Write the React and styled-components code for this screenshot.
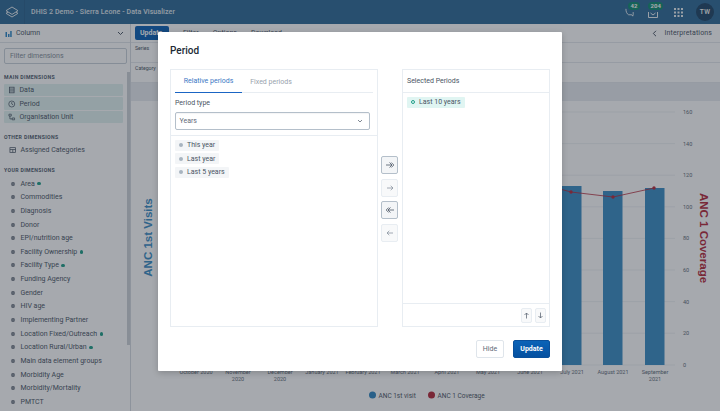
import React from "react";
import styled, { createGlobalStyle } from "styled-components";

const Global = createGlobalStyle`
  html, body { margin: 0; padding: 0; background: #fff; }
  body { font-family: Roboto, "Noto Sans", sans-serif; }
  * { box-sizing: border-box; }
`;

const Page = styled.div`
  position: relative; width: 720px; height: 411px; overflow: hidden;
  display: flex; flex-direction: column; background: #fff; color: #4a5564;
`;
const Header = styled.header`
  height: 24px; flex: none; display: flex; align-items: center;
  background: #2e6a97; color: #fff;
`;
const LogoBox = styled.div`
  width: 25px; height: 24px; display: flex; align-items: center; justify-content: center;
  border-right: 1px solid #2a628d;
`;
const AppTitle = styled.div`
  margin-left: 6px; flex: 1; font-size: 7px; font-weight: 500; letter-spacing: .1px; white-space: nowrap; opacity: .85;
`;
const HeaderIcon = styled.div`
  position: relative; width: 10px; height: 10px; margin-right: ${p => p.$gap}px;
  display: flex; align-items: center; justify-content: center;
`;
const Badge = styled.span`
  position: absolute; top: -5px; left: ${p => p.$left}px; height: 7.5px; padding: 0 2.5px; border-radius: 4px;
  background: #0f8a70; color: #fff; font-size: 6px; font-weight: 700; line-height: 7.5px;
`;
const Avatar = styled.div`
  width: 18px; height: 18px; border-radius: 50%; margin-right: 6px; background: #1e4566;
  display: flex; align-items: center; justify-content: center;
  font-size: 6.5px; font-weight: 500; letter-spacing: .4px;
`;
const Body = styled.div`flex: 1; display: flex; min-height: 0;`;
const Sidebar = styled.aside`
  position: relative; width: 131px; flex: none; overflow: hidden; border-right: 1px solid #d5dbe2;
`;
const ChartType = styled.div`
  height: 19px; display: flex; align-items: center; padding: 0 6px 0 5px; gap: 4px;
  font-size: 7px; border-bottom: 1px solid #dfe4ea; color: #4a5564;
`;
const Grow = styled.span`flex: 1;`;
const FilterInput = styled.div`
  margin: 5px 4px 0; width: 123px; height: 16px; border: 1px solid #c9d1d9; border-radius: 2px;
  padding: 0 5px; font-size: 7px; line-height: 14px; color: #848e99; background: #fff;
`;
const SectionTitle = styled.div`
  margin: ${p => p.$top}px 0 0 4px; height: 9px; line-height: 9px; font-size: 5.2px; font-weight: 700;
  letter-spacing: .35px; color: #525e6e; white-space: nowrap;
`;
const Items = styled.div`display: flex; flex-direction: column; margin-top: ${p => p.$top || 1}px;`;
const Item = styled.div`
  height: ${p => p.$chip ? "12.5px" : "13.66px"}; margin: ${p => p.$chip ? "0.6px 7px 0.6px 4px" : "0 7px 0 4px"};
  display: flex; align-items: center; gap: 4px; padding-left: ${p => p.$chip ? "4px" : "5px"};
  font-size: 7px; color: #4a5564; white-space: nowrap; border-radius: 1px;
  background: ${p => p.$chip ? "#e2f2f1" : "transparent"};
`;
const IconSlot = styled.span`
  width: 7.5px; height: 8px; flex: none; display: flex; align-items: center; justify-content: center;
`;
const Dot = styled.span`flex: none; width: 3.5px; height: 3.5px; border-radius: 50%; background: #1f9e88; margin-left: -1.5px;`;
const Thumb = styled.div`
  position: absolute; right: 0; top: 48px; width: 3.5px; height: 273px; background: #cdd2d8;
`;
const Main = styled.main`flex: 1; min-width: 0; display: flex; flex-direction: column;`;
const Toolbar = styled.div`
  height: 19px; flex: none; display: flex; align-items: center; padding-left: 4px;
  font-size: 7px; border-bottom: 1px solid #e4e8ed;
`;
const UpdateSmall = styled.div`
  width: 34px; height: 14px; border-radius: 2px; background: #0a5fb4; color: #fff;
  display: flex; align-items: center; padding-left: 5px; font-weight: 700; font-size: 7px; margin-right: 14px;
`;
const ToolLink = styled.span`margin-right: ${p => p.$gap}px;`;
const Interp = styled.div`
  margin-left: auto; margin-right: 8px; display: flex; align-items: center; gap: 8px; font-size: 7px;
  letter-spacing: .12px; color: #4a5564;
`;
const LayoutRow = styled.div`
  height: 20px; flex: none; padding: 2px 0 0 4px; font-size: 5.2px; color: #4a5564; border-bottom: 1px solid #e4e8ed;
`;
const Band = styled.div`height: 18px; flex: none; background: #e8ecf1;`;
const ChartWrap = styled.div`flex: 1; min-height: 0;`;
const Chart = styled.svg`display: block;`;

const Overlay = styled.div`
  position: absolute; inset: 0; background: rgba(33, 41, 52, .4);
`;
const Modal = styled.div`
  position: absolute; left: 158px; top: 32px; width: 404px; height: 339px; background: #fff;
  border-radius: 1px; padding: 0 12px; display: flex; flex-direction: column;
  box-shadow: 0 2px 6px rgba(0,0,0,.2);
`;
const ModalTitle = styled.h2`
  margin: 0; height: 37px; line-height: 37px; font-size: 10px; font-weight: 500; color: #212934;
`;
const Columns = styled.div`display: flex; height: 258px;`;
const Panel = styled.div`
  width: ${p => p.$w}px; height: 100%; border: 1px solid #e8edf2; display: flex; flex-direction: column;
`;
const Tabs = styled.div`
  margin: 0 4px; height: 23px; flex: none; display: flex; border-bottom: 1px solid #e8edf2;
`;
const Tab = styled.div`
  width: ${p => p.$w}px; height: 23px; display: flex; align-items: center; justify-content: center; font-size: 7px;
  color: ${p => p.$active ? "#3a78c4" : "#98a2ad"};
  border-bottom: ${p => p.$active ? "1.5px solid #1a65c4" : "none"};
`;
const FieldLabel = styled.div`
  margin: 6px 0 0 4px; height: 9px; line-height: 9px; font-size: 7px; color: #4a5564;
`;
const Select = styled.div`
  margin: 4px 0 0 4px; width: 195px; height: 17.5px; border: 1px solid #b4bfca; border-radius: 2px;
  display: flex; align-items: center; justify-content: space-between; padding: 0 6px 0 3.5px;
  font-size: 7px; color: #5f6a77; box-shadow: inset 0 1px 1px rgba(33,41,52,.05);
`;
const OptionList = styled.div`
  margin-top: 5.5px; border-top: 1px solid #e8edf2; padding: 3.5px 0 0 4px; display: flex; flex-direction: column; align-items: flex-start; gap: 2.67px;
`;
const Chip = styled.div`
  height: 11px; display: flex; align-items: center; gap: 4px; padding: 0 4px;
  border-radius: 1px; font-size: 7px; color: #4a5564; white-space: nowrap;
  background: ${p => p.$sel ? "#e0f5f2" : "#f3f5f7"};
`;
const ChipDot = styled.span`
  width: 4px; height: 4px; border-radius: 50%;
  background: ${p => p.$sel ? "transparent" : "#a8b4c0"};
  border: ${p => p.$sel ? "1px solid #1f9e88" : "none"};
`;
const Transfer = styled.div`
  width: 24px; padding-right: 1px; margin-top: 87px; display: flex; flex-direction: column; align-items: center; gap: 4.5px;
`;
const ArrowBtn = styled.div`
  width: 17px; height: 18px; border-radius: 2px; display: flex; align-items: center; justify-content: center;
  background: ${p => p.$off ? "#f8f9fa" : "#f3f5f7"};
  border: 1px solid ${p => p.$off ? "#e8edf2" : "#b4bfca"};
`;
const SelHeader = styled.div`
  height: 23px; flex: none; padding-left: 4px; display: flex; align-items: center; font-size: 7px; color: #4a5564;
  border-bottom: 1px solid #e8edf2;
`;
const SelList = styled.div`flex: 1; padding: 3.5px 0 0 4px; display: flex; align-items: flex-start;`;
const SelFooter = styled.div`
  height: 23px; flex: none; border-top: 1px solid #e8edf2; display: flex; align-items: center; justify-content: flex-end;
  gap: 3px; padding-right: 3px;
`;
const SmallBtn = styled.div`
  width: 11px; height: 15px; border: 1px solid #e8edf2; border-radius: 2px; background: #f8f9fa;
  display: flex; align-items: center; justify-content: center;
`;
const ModalFooter = styled.div`
  margin-top: 13px; display: flex; justify-content: flex-end; gap: 9px;
`;
const HideBtn = styled.div`
  width: 28px; height: 18px; border: 1px solid #dfe5eb; border-radius: 2px; font-size: 7px; color: #5f6a77;
  display: flex; align-items: center; justify-content: center;
`;
const UpdateBtn = styled.div`
  width: 37px; height: 18px; border-radius: 2px; font-size: 7px; font-weight: 700; color: #fff;
  display: flex; align-items: center; justify-content: center;
  background: linear-gradient(#0b63b8, #0550a0); border: 1px solid #09509c;
`;

const Ico = ({ s = 8, w = 8, children, c = "#4a5564", sw = .8 }) => (
  <svg width={s} height={s} viewBox={`0 0 ${w} ${w}`} fill="none" stroke={c} strokeWidth={sw}>{children}</svg>
);
const DataIcon = () => <Ico><rect x="1.5" y="1" width="5" height="6" /><path d="M1.5 3h5M1.5 5h5" /></Ico>;
const ClockIcon = () => <Ico><circle cx="4" cy="4" r="3.2" /><path d="M4 2v2l1.5 1" /></Ico>;
const OrgIcon = () => <Ico><path d="M1 1h2.5v2H1zM4.5 5h2.5v2H4.5zM2 3v3h2.5" /></Ico>;
const TableIcon = () => <Ico><rect x="1" y="1.5" width="6" height="5" /><path d="M1 3.5h6M4 3.5v3" /></Ico>;
const DimIcon = () => (
  <svg width="6" height="6" viewBox="0 0 6 6"><circle cx="3" cy="3" r="2" fill="#626c78" /><path d="M.8 2.3h4.4M.8 3.700h4.400" stroke="#dfe3e8" strokeWidth=".35" /></svg>
);
const ArrowRight = ({ c = "#4a5564", dbl }) => (
  <Ico s={10} w={10} c={c}><path d={dbl ? "M1 5h6" : "M2 5h6"} />{dbl ? <path d="M4.500 2.500L7 5 4.500 7.500M6.300 2.500L8.800 5 6.300 7.500" /> : <path d="M5.700 2.800L8 5 5.700 7.200" />}</Ico>
);
const ArrowLeft = ({ c = "#4a5564", dbl }) => (
  <Ico s={10} w={10} c={c}><path d={dbl ? "M9 5H3" : "M8 5H2"} />{dbl ? <path d="M5.500 2.500L3 5l2.500 2.500M3.700 2.500L1.200 5l2.500 2.500" /> : <path d="M4.300 2.800L2 5l2.300 2.200" />}</Ico>
);

const dims = [
  ["Area", 1], ["Commodities"], ["Diagnosis"], ["Donor"], ["EPI/nutrition age"], ["Facility Ownership", 1], ["Facility Type", 1],
  ["Funding Agency"], ["Gender"], ["HIV age"], ["Implementing Partner"], ["Location Fixed/Outreach", 1],
  ["Location Rural/Urban", 1], ["Main data element groups"], ["Morbidity Age"], ["Morbidity/Mortality"], ["PMTCT"],
];

const axisY = [[160, 112], [140, 143.6], [120, 175.2], [100, 206.8], [80, 238.4], [60, 270], [40, 301.6], [20, 333.2], [0, 365]];
const bars = [[562, 186], [603, 191], [645, 188]];
const months = [
  [196, "October 2020"], [238, "November", "2020"], [280, "December", "2020"], [322, "January 2021"], [363, "February 2021"],
  [405, "March 2021"], [447, "April 2021"], [488, "May 2021"], [530, "June 2021"], [572, "July 2021"], [613, "August 2021"], [655, "September", "2021"],
];
const chartFont = "Roboto, sans-serif";
const BLUE = "#3a8cc4";
const RED = "#b5283a";

export default function App() {
  return (
    <Page>
      <Global />
      <Header>
        <LogoBox>
          <svg width="14" height="12" viewBox="0 0 14 12" fill="none" stroke="#fff" strokeWidth="1" opacity=".85">
            <path d="M7 1L13 4.700 7 8.400 1 4.700z" /><path d="M3 6.100L1 7.300 7 11l6-3.700-2-1.200" />
          </svg>
        </LogoBox>
        <AppTitle>DHIS 2 Demo - Sierra Leone - Data Visualizer</AppTitle>
        <HeaderIcon $gap={13}>
          <svg width="11" height="11" viewBox="0 0 11 11" fill="none" stroke="#fff" strokeWidth=".9">
            <path d="M1 1.500c0 3 1 5.500 3 6.500h3.500l1 1.500.5-1.500V5" />
          </svg>
          <Badge $left={3}>42</Badge>
        </HeaderIcon>
        <HeaderIcon $gap={15}>
          <svg width="10" height="7" viewBox="0 0 10 7" fill="none" stroke="#fff" strokeWidth=".9" style={{ marginTop: 4 }}>
            <path d="M.5 1v5.500h9V1M2.500 2l2.500 2 2.500-2" />
          </svg>
          <Badge $left={0}>204</Badge>
        </HeaderIcon>
        <HeaderIcon $gap={13}>
          <svg width="9" height="9" viewBox="0 0 9 9" fill="#fff" opacity=".9">
            {[0, 3.5, 7].flatMap(x => [0, 3.5, 7].map(y => <rect key={`${x}${y}`} x={x} y={y} width="2" height="2" />))}
          </svg>
        </HeaderIcon>
        <Avatar>TW</Avatar>
      </Header>
      <Body>
        <Sidebar>
          <ChartType>
            <svg width="7" height="7" viewBox="0 0 7 7"><path d="M.5 2h1.500v5H.5z" fill="#2a86c8" /><path d="M3 4h1.500v3H3z" fill="#2a86c8" /><path d="M5.200 1h1.500v6H5.200z" fill="#2a86c8" /></svg>
            <span>Column</span>
            <Grow />
            <svg width="7" height="5" viewBox="0 0 7 5" fill="none" stroke="#4a5564"><path d="M1 1l2.500 2.500L6 1" /></svg>
          </ChartType>
          <FilterInput>Filter dimensions</FilterInput>
          <SectionTitle $top={8.5}>MAIN DIMENSIONS</SectionTitle>
          <Items $top={1.5}>
            <Item $chip><IconSlot><DataIcon /></IconSlot>Data</Item>
            <Item $chip><IconSlot><ClockIcon /></IconSlot>Period</Item>
            <Item $chip><IconSlot><OrgIcon /></IconSlot>Organisation Unit</Item>
          </Items>
          <SectionTitle $top={8.500}>OTHER DIMENSIONS</SectionTitle>
          <Items $top={1.5}>
            <Item><IconSlot><TableIcon /></IconSlot>Assigned Categories</Item>
          </Items>
          <SectionTitle $top={9.500}>YOUR DIMENSIONS</SectionTitle>
          <Items $top={1.5}>
            {dims.map(([name, used]) => (
              <Item key={name}><IconSlot><DimIcon /></IconSlot>{name}{used && <Dot />}</Item>
            ))}
          </Items>
          <Thumb />
        </Sidebar>
        <Main>
          <Toolbar>
            <UpdateSmall>Update</UpdateSmall>
            <ToolLink $gap={14}>Filter</ToolLink>
            <ToolLink $gap={14}>Options</ToolLink>
            <ToolLink $gap={0}>Download</ToolLink>
            <Interp>
              <svg width="5" height="7" viewBox="0 0 5 7" fill="none" stroke="#4a5564" strokeWidth="1"><path d="M4 .8L1.300 3.500 4 6.200" /></svg>
              Interpretations
            </Interp>
          </Toolbar>
          <LayoutRow>Series</LayoutRow>
          <LayoutRow>Category</LayoutRow>
          <Band />
          <ChartWrap>
            <Chart width="589" height="310" viewBox="131 101 589 310">
              {axisY.map(([v, y]) => (
                <g key={v}>
                  <line x1="163" x2="675" y1={y} y2={y} stroke="#e4e8ed" strokeWidth=".6" />
                  <text x="683" y={y + 2} fontSize="5.500" fill="#626c78" fontFamily={chartFont}>{v}</text>
                </g>
              ))}
              {bars.map(([x, y]) => <rect key={x} x={x} y={y} width="19.500" height={365 - y} fill={BLUE} />)}
              <polyline points="560,189 571,192 613,197 654,188" fill="none" stroke={RED} strokeWidth=".8" />
              {[[571, 192], [613, 197], [654, 188]].map(([x, y]) => <circle key={x} cx={x} cy={y} r="1.700" fill={RED} />)}
              {months.map(([x, a, b]) => (
                <g key={a} fontSize="5.500" fill="#626c78" fontFamily={chartFont} textAnchor="middle">
                  <text x={x} y="374">{a}</text>
                  {b && <text x={x} y="381">{b}</text>}
                </g>
              ))}
              <text transform="translate(152 237.500) rotate(-90)" textAnchor="middle" fontSize="11.500" fontWeight="700" fill={BLUE} fontFamily="'Liberation Sans', sans-serif">ANC 1st Visits</text>
              <text transform="translate(700 238) rotate(90)" textAnchor="middle" fontSize="11.500" fontWeight="700" fill={RED} fontFamily="'Liberation Sans', sans-serif">ANC 1 Coverage</text>
              <circle cx="372.500" cy="395" r="3.500" fill="#2f86c1" />
              <text x="378.500" y="397.500" fontSize="6.500" fill="#4a5564" fontFamily={chartFont}>ANC 1st visit</text>
              <circle cx="431.500" cy="395" r="3.500" fill={RED} />
              <text x="437.500" y="397.500" fontSize="6.500" fill="#4a5564" fontFamily={chartFont}>ANC 1 Coverage</text>
            </Chart>
          </ChartWrap>
        </Main>
      </Body>
      <Overlay />
      <Modal>
        <ModalTitle>Period</ModalTitle>
        <Columns>
          <Panel $w={208}>
            <Tabs>
              <Tab $active $w={67}>Relative periods</Tab>
              <Tab $w={58}>Fixed periods</Tab>
            </Tabs>
            <FieldLabel>Period type</FieldLabel>
            <Select>
              <span>Years</span>
              <svg width="6" height="4" viewBox="0 0 6 4" fill="none" stroke="#5f6a77" strokeWidth=".8"><path d="M1 1l2 2 2-2" /></svg>
            </Select>
            <OptionList>
              <Chip><ChipDot />This year</Chip>
              <Chip><ChipDot />Last year</Chip>
              <Chip><ChipDot />Last 5 years</Chip>
            </OptionList>
          </Panel>
          <Transfer>
            <ArrowBtn><ArrowRight dbl /></ArrowBtn>
            <ArrowBtn $off><ArrowRight c="#8a95a1" /></ArrowBtn>
            <ArrowBtn><ArrowLeft dbl /></ArrowBtn>
            <ArrowBtn $off><ArrowLeft c="#8a95a1" /></ArrowBtn>
          </Transfer>
          <Panel $w={148}>
            <SelHeader>Selected Periods</SelHeader>
            <SelList><Chip $sel><ChipDot $sel />Last 10 years</Chip></SelList>
            <SelFooter>
              <SmallBtn><Ico s={7} w={7} c="#5f6a77"><path d="M3.500 6.500V1M1.500 3l2-2 2 2" /></Ico></SmallBtn>
              <SmallBtn><Ico s={7} w={7} c="#5f6a77"><path d="M3.500 .5V6M1.500 4l2 2 2-2" /></Ico></SmallBtn>
            </SelFooter>
          </Panel>
        </Columns>
        <ModalFooter>
          <HideBtn>Hide</HideBtn>
          <UpdateBtn>Update</UpdateBtn>
        </ModalFooter>
      </Modal>
    </Page>
  );
}
